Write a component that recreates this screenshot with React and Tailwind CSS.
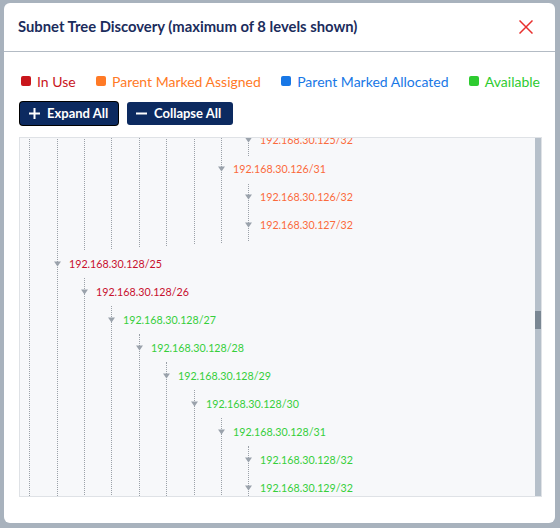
import React from "react";

const RED = "text-[#c8102e]";
const ORANGE = "text-[#fb6a3c]";
const GREEN = "text-[#36cf3a]";

// margin that puts each child list's dotted guide under the next level's arrows
const LEVEL_ML = [
  "ml-[27px]",
  "ml-[26px]",
  "ml-[26px]",
  "ml-[27px]",
  "ml-[26px]",
  "ml-[27px]",
  "ml-[26px]",
  "ml-[26px]",
];

const n = (label, color, children) => ({ label, color, children });

// the view is scrolled, so the ancestors of the first rows have no visible row
const tree = [
  n(null, null, [
    n(null, null, [
      n(null, null, [
        n(null, null, [
          n(null, null, [
            n(null, null, [
              n(null, null, [
                n(null, null, [n("192.168.30.125/32", ORANGE)]),
                n("192.168.30.126/31", ORANGE, [
                  n("192.168.30.126/32", ORANGE),
                  n("192.168.30.127/32", ORANGE),
                ]),
              ]),
            ]),
          ]),
        ]),
      ]),
    ]),
    n("192.168.30.128/25", RED, [
      n("192.168.30.128/26", RED, [
        n("192.168.30.128/27", GREEN, [
          n("192.168.30.128/28", GREEN, [
            n("192.168.30.128/29", GREEN, [
              n("192.168.30.128/30", GREEN, [
                n("192.168.30.128/31", GREEN, [
                  n("192.168.30.128/32", GREEN),
                  n("192.168.30.129/32", GREEN),
                ]),
              ]),
            ]),
          ]),
        ]),
      ]),
    ]),
  ]),
];

const Caret = () => (
  <svg width="9" height="9" viewBox="0 0 9 9" className="shrink-0">
    <path d="M1 1.5H8L4.5 6.5Z" fill="#9aa2ab" />
  </svg>
);

const Branch = ({ items, level, className = "" }) => (
  <div className={`border-l border-dotted border-[#9ba1a8] pb-[1.5px] ${className}`}>
    {items.map((item, i) => (
      <div key={i}>
        {item.label && (
          <div className="-ml-[5px] flex h-[28px] items-center">
            <Caret />
            <span className={`ml-[7px] text-[10.7px] ${item.color}`}>
              {item.label}
            </span>
          </div>
        )}
        {item.children && (
          <Branch
            items={item.children}
            level={level + 1}
            className={LEVEL_ML[level]}
          />
        )}
      </div>
    ))}
  </div>
);

const legend = [
  { label: "In Use", box: "bg-[#c9161c]", text: "text-[#c9161c]" },
  { label: "Parent Marked Assigned", box: "bg-[#ff7a26]", text: "text-[#ff7a26]" },
  { label: "Parent Marked Allocated", box: "bg-[#1877e6]", text: "text-[#1877e6]" },
  { label: "Available", box: "bg-[#2ecb30]", text: "text-[#2ecb30]" },
];

export default function App() {
  return (
    <div
      className="h-[528px] w-[560px] overflow-hidden bg-[#a8b2bd] pl-[4px] pt-[3px]"
      style={{ fontFamily: "Lato, 'Noto Sans', sans-serif" }}
    >
      <div className="flex h-[520px] w-[551px] flex-col rounded-[6px] bg-white">
        <div className="flex h-[49px] items-center justify-between border-b border-[#b3bbc4] pb-[1px] pl-[14px] pr-[22px]">
          <h2 className="text-[14.8px] font-bold text-[#1b2c5c]">
            Subnet Tree Discovery (maximum of 8 levels shown)
          </h2>
          <button type="button" aria-label="Close">
            <svg width="14" height="14" viewBox="0 0 14 14">
              <path
                d="M0.5 0.5L13.5 13.5M13.5 0.5L0.5 13.5"
                stroke="#e8302e"
                strokeWidth="1.5"
              />
            </svg>
          </button>
        </div>

        <div className="flex flex-1 flex-col pl-[15px] pr-[13px] pt-[19px]">
          <div className="flex h-[20px] items-center justify-between px-[2px] text-[14px]">
            {legend.map((l) => (
              <div key={l.label} className="flex items-center gap-[6px]">
                <span className={`h-[10px] w-[10px] rounded-[2px] ${l.box}`} />
                <span className={l.text}>{l.label}</span>
              </div>
            ))}
          </div>

          <div className="mt-[11px] flex gap-[9px] pl-[1px] text-[13px] font-bold text-white">
            <button
              type="button"
              className="flex h-[23px] w-[98px] items-center gap-[7px] rounded-[3px] bg-[#0c2a60] pl-[9px] ring-1 ring-black"
            >
              <svg width="11" height="11" viewBox="0 0 11 11">
                <path d="M5.5 0V11M0 5.5H11" stroke="white" strokeWidth="2" />
              </svg>
              Expand All
            </button>
            <button
              type="button"
              className="flex h-[23px] w-[106px] items-center gap-[7px] rounded-[3px] bg-[#0c2a60] pl-[9px]"
            >
              <svg width="11" height="11" viewBox="0 0 11 11">
                <path d="M0 5.5H11" stroke="white" strokeWidth="2" />
              </svg>
              Collapse All
            </button>
          </div>

          <div className="mt-[12px] flex h-[360px] border border-[#dfe2e6] bg-[#f7f8fa]">
            <div className="flex-1 overflow-hidden">
              <div className="-mt-[12px]">
                <Branch items={tree} level={0} className="ml-[9px]" />
              </div>
            </div>
            <div className="flex w-[6px] flex-col bg-[#b6c0ca]">
              <div className="h-[173px]" />
              <div className="h-[18px] bg-[#7a8793]" />
            </div>
          </div>
        </div>
      </div>
    </div>
  );
}
